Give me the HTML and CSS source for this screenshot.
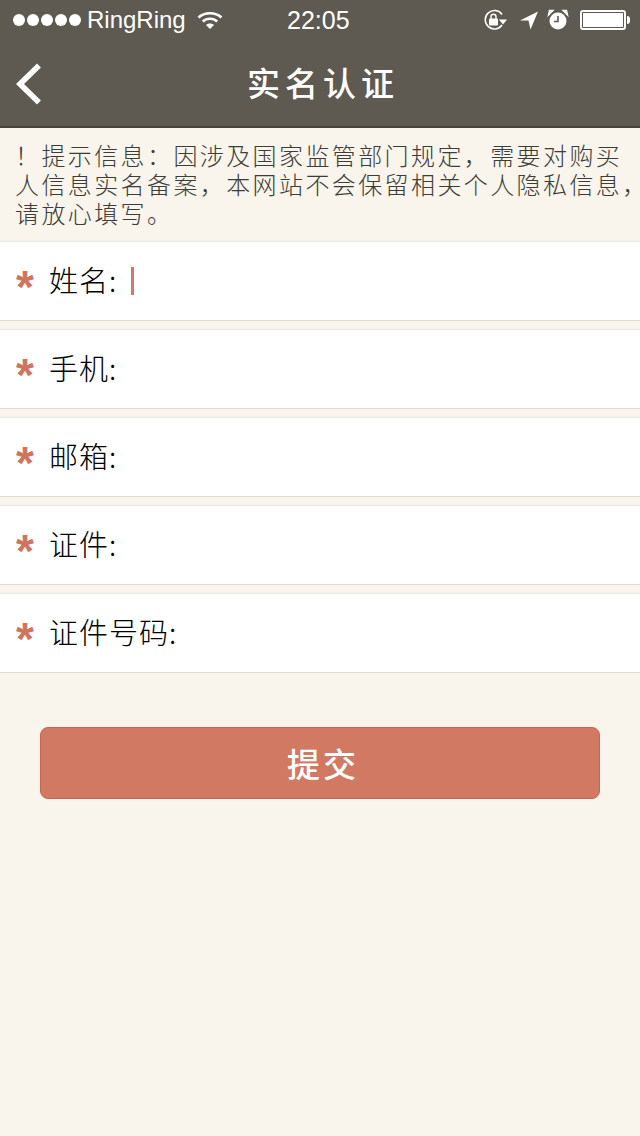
FILE: index.html
```html
<!DOCTYPE html>
<html lang="zh">
<head>
<meta charset="utf-8">
<title>实名认证</title>
<link rel="stylesheet" href="styles.css">
</head>
<body>
<header class="top">
  <div class="status">
    <div class="status-left">
      <span class="dots"><i></i><i></i><i></i><i></i><i></i></span>
      <span class="carrier">RingRing</span>
      <svg class="wifi" width="26" height="20" viewBox="0 0 26 20"><path d="M1.500 7.500C7.500 1.800 18.500 1.800 24.500 7.500" fill="none" stroke="#fff" stroke-width="2.600"/><path d="M5.800 11.500C9.800 7.800 16.200 7.800 20.200 11.500" fill="none" stroke="#fff" stroke-width="2.600"/><path d="M9 15c2.400-2 5.600-2 8 0l-4 4z" fill="#fff"/></svg>
    </div>
    <span class="clock">22:05</span>
    <div class="status-right">
      <svg width="26" height="22" viewBox="0 0 26 22"><path d="M20 16A9.200 9.200 0 1 1 20 5.500" fill="none" stroke="#fff" stroke-width="1.500"/><path d="M17 10.500h8l-4 5z" fill="#fff"/><rect x="7" y="9.500" width="9" height="7" rx="1" fill="#fff"/><path d="M9 10V7.800a2.500 2.500 0 0 1 5 0V10" fill="none" stroke="#fff" stroke-width="1.400"/></svg>
      <svg class="arrow" width="20" height="20" viewBox="0 0 20 20"><path d="M19 1.500 1 10.500h8.500l2 9z" fill="#fff"/></svg>
      <svg width="22" height="22" viewBox="0 0 22 22"><circle cx="11" cy="12" r="8.500" fill="#fff"/><path d="M11 7v5.500H7" fill="none" stroke="#5e5a52" stroke-width="1.600"/><path d="M1.500 6 6 1.500 2.500 1.500zM20.500 6 16 1.500 19.500 1.500z" fill="#fff" stroke="#fff" stroke-width="1.400"/></svg>
      <span class="battery"><span class="battery-fill"></span></span>
    </div>
  </div>
  <div class="nav">
    <svg class="back" width="26" height="42" viewBox="0 0 26 42"><path d="M23 2.500 4 21l19 18.500" fill="none" stroke="#fff" stroke-width="5.600"/></svg>
    <h1 class="title">实名认证</h1>
  </div>
</header>
<p class="notice">！提示信息：因涉及国家监管部门规定，需要对购买<br>人信息实名备案，本网站不会保留相关个人隐私信息<span class="tight">，</span><br>请放心填写。</p>
<form class="form">
  <div class="row"><span class="star">*</span><label class="label">姓名:</label><span class="caret"></span></div>
  <div class="row"><span class="star">*</span><label class="label">手机:</label></div>
  <div class="row"><span class="star">*</span><label class="label">邮箱:</label></div>
  <div class="row"><span class="star">*</span><label class="label">证件:</label></div>
  <div class="row"><span class="star">*</span><label class="label">证件号码:</label></div>
  <button class="submit" type="button">提交</button>
</form>
</body>
</html>
```
FILE: styles.css
```css
* { box-sizing: border-box; }
html, body { margin: 0; padding: 0; }
body {
  width: 640px;
  height: 1136px;
  background: #f9f5ed;
  font-family: "Noto Sans CJK SC", "Liberation Sans", sans-serif;
  overflow: hidden;
}
.top {
  height: 128px;
  background: #5e5a52;
  border-bottom: 2px solid #46433c;
  color: #fff;
}
.status {
  height: 40px;
  padding: 0 12px 0 13px;
  display: flex;
  align-items: center;
  justify-content: space-between;
  position: relative;
}
.status-left { display: flex; align-items: center; }
.dots { display: flex; gap: 2px; }
.dots i { width: 12px; height: 12px; border-radius: 50%; background: #fff; display: block; }
.carrier {
  font-family: "Liberation Sans", sans-serif;
  font-size: 24px;
  margin-left: 6px;
}
.wifi { margin-left: 11px; }
.clock {
  font-family: "Liberation Sans", sans-serif;
  font-size: 25px;
  position: absolute;
  left: 287px;
  top: 6px;
}
.status-right { display: flex; align-items: center; gap: 8px; }
.arrow { margin-left: 3px; }
.battery {
  width: 46px;
  height: 20px;
  border: 2px solid #fff;
  border-radius: 3px;
  padding: 1px;
  display: block;
  position: relative;
  margin-left: 3px;
  margin-right: 2px;
}
.battery::after {
  content: "";
  position: absolute;
  right: -6px;
  top: 4px;
  width: 3px;
  height: 8px;
  background: #fff;
  border-radius: 0 3px 3px 0;
}
.battery-fill { display: block; height: 100%; background: #fff; }
.nav {
  height: 86px;
  position: relative;
  display: flex;
  align-items: center;
  justify-content: center;
}
.back { position: absolute; left: 16px; top: 23px; }
.title {
  margin: 0;
  padding-left: 6px;
  padding-bottom: 2px;
  font-size: 33px;
  font-weight: 500;
  letter-spacing: 5px;
  line-height: 1;
}
.notice {
  margin: 0;
  height: 113px;
  padding: 12px 0 0 15px;
  font-size: 24px;
  line-height: 29px;
  letter-spacing: 2.400px;
  color: #3c3c38;
  font-weight: 300;
  white-space: nowrap;
}
.tight {
  font-feature-settings: "halt";
  letter-spacing: 0;
}
.row {
  height: 80px;
  margin-bottom: 8px;
  background: #fff;
  border-top: 1px solid #e8e6e4;
  border-bottom: 1px solid #dedcd8;
  display: flex;
  align-items: center;
}
.star {
  width: 49px;
  padding-left: 16px;
  font-family: "Liberation Sans", sans-serif;
  font-size: 46px;
  font-weight: 700;
  color: #d0745f;
  line-height: 1;
  height: 34px;
}
.label {
  font-size: 29px;
  color: #000;
  font-weight: 300;
  letter-spacing: 1px;
  line-height: 1;
  padding-bottom: 4px;
}
.caret {
  width: 3px;
  height: 28px;
  margin-left: 14px;
  background: #d27963;
}
.submit {
  display: block;
  width: 560px;
  height: 72px;
  margin: 54px 0 0 40px;
  background: #d27963;
  border: 1px solid #c8654e;
  border-radius: 8px;
  color: #fff;
  font-family: inherit;
  font-size: 33px;
  font-weight: 500;
  letter-spacing: 3px;
  padding: 0 0 0 6px;
}
```
